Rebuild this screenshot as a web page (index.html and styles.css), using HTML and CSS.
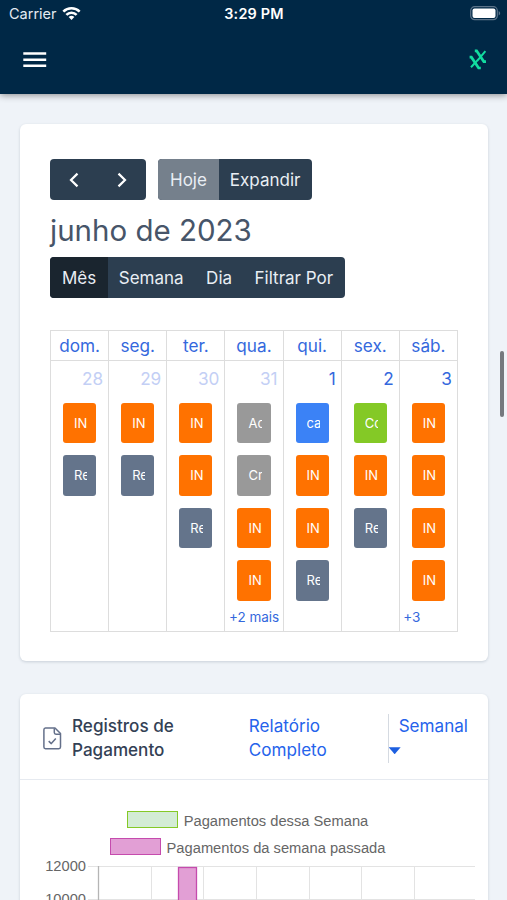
FILE: index.html
```
<!DOCTYPE html>
<html lang="pt-BR">

<head>
  <meta charset="utf-8">
  <meta name="viewport" content="width=device-width, initial-scale=1.0">
  <title>Painel</title>
  <link rel="stylesheet" href="styles.css">
</head>

<body>
  <header class="topbar">
    <div class="status">
      <div class="carrier">
        <span>Carrier</span>
        <svg width="19" height="15" viewBox="0 0 20 15">
          <g fill="none" stroke="#fff" stroke-width="2.7">
            <path d="M1.4 5.6a12.2 12.2 0 0 1 17.2 0" />
            <path d="M4.6 8.9a7.6 7.6 0 0 1 10.8 0" />
          </g>
          <path fill="#fff" d="M10 14.4l-3-3.1a4.3 4.3 0 0 1 6 0z" />
        </svg>
      </div>
      <div class="clock">3:29 PM</div>
      <svg class="battery" width="31" height="15" viewBox="0 0 31 15">
        <rect x=".7" y=".7" width="26.6" height="13" rx="4" fill="none" stroke="#5b7389" stroke-width="1.2" />
        <rect x="2.5" y="2.5" width="23" height="9.4" rx="2" fill="#fff" />
        <path d="M28.7 5v4.4c2-.8 2-3.6 0-4.4z" fill="#5b7389" />
      </svg>
    </div>
    <nav class="nav">
      <svg width="24" height="16" viewBox="0 0 24 16">
        <path d="M.3 1.5h22.9M.3 7.7h22.9M.3 13.8h22.9" stroke="#fff" stroke-width="2.5" />
      </svg>
      <svg class="brand" width="18" height="21" viewBox="0 0 18 21" fill="none" stroke="#12dca0">
        <path stroke-width="2.7" d="M5.800 1.800h1.800l7.200 10.800h2.200M.600 8.200h1.800l7.200 10.800h2.200" />
        <path stroke-width="2" d="M16.400 2.200L8.400 11.600M11 8.600L2 18.200" />
      </svg>
    </nav>
  </header>

  <main class="content">
    <section class="card calendar-card">
      <div class="toolbar">
        <div class="btn-group arrows">
          <button class="btn"><svg width="10" height="16" viewBox="0 0 10 16"><path d="M8.5 1.6L2 8l6.500 6.400" /></svg></button>
          <button class="btn"><svg width="10" height="16" viewBox="0 0 10 16"><path d="M1.500 1.600L8 8l-6.500 6.400" /></svg></button>
        </div>
        <div class="btn-group">
          <button class="btn disabled">Hoje</button>
          <button class="btn">Expandir</button>
        </div>
      </div>
      <h2 class="month">junho de 2023</h2>
      <div class="btn-group views">
        <button class="btn active">Mês</button>
        <button class="btn">Semana</button>
        <button class="btn">Dia</button>
        <button class="btn">Filtrar Por</button>
      </div>

      <div class="calendar">
        <div class="weekday">dom.</div>
        <div class="weekday">seg.</div>
        <div class="weekday">ter.</div>
        <div class="weekday">qua.</div>
        <div class="weekday">qui.</div>
        <div class="weekday">sex.</div>
        <div class="weekday">sáb.</div>

        <div class="day other">
          <span class="num">28</span>
          <a class="event orange"><span>IN</span></a>
          <a class="event slate"><span>Re</span></a>
        </div>
        <div class="day other">
          <span class="num">29</span>
          <a class="event orange"><span>IN</span></a>
          <a class="event slate"><span>Re</span></a>
        </div>
        <div class="day other">
          <span class="num">30</span>
          <a class="event orange"><span>IN</span></a>
          <a class="event orange"><span>IN</span></a>
          <a class="event slate"><span>Re</span></a>
        </div>
        <div class="day other">
          <span class="num">31</span>
          <a class="event gray"><span>Ac</span></a>
          <a class="event gray"><span>Cr</span></a>
          <a class="event orange"><span>IN</span></a>
          <a class="event orange"><span>IN</span></a>
          <a class="more">+2 mais</a>
        </div>
        <div class="day">
          <span class="num">1</span>
          <a class="event blue"><span>ca</span></a>
          <a class="event orange"><span>IN</span></a>
          <a class="event orange"><span>IN</span></a>
          <a class="event slate"><span>Re</span></a>
        </div>
        <div class="day">
          <span class="num">2</span>
          <a class="event green"><span>Co</span></a>
          <a class="event orange"><span>IN</span></a>
          <a class="event slate"><span>Re</span></a>
        </div>
        <div class="day">
          <span class="num">3</span>
          <a class="event orange"><span>IN</span></a>
          <a class="event orange"><span>IN</span></a>
          <a class="event orange"><span>IN</span></a>
          <a class="event orange"><span>IN</span></a>
          <a class="more">+3</a>
        </div>
      </div>
    </section>

    <section class="card">
      <div class="card-header">
        <svg class="file-icon" width="19" height="23" viewBox="0 0 19 23" fill="none" stroke="#64708a" stroke-width="1.5" stroke-linejoin="round">
          <path d="M2.500 1h9.500l5.500 5.500v13.500a1.700 1.700 0 0 1-1.700 1.700H2.500A1.700 1.700 0 0 1 .9 20V2.700A1.700 1.700 0 0 1 2.500 1z" />
          <path d="M11.300 1.200v4.300a1.700 1.700 0 0 0 1.700 1.700h4.300M5.700 14.100l2.600 2.500 4.500-5" />
        </svg>
        <h3 class="card-title">Registros de Pagamento</h3>
        <a class="report">Relatório Completo</a>
        <a class="period">Semanal <i class="caret"></i></a>
      </div>
      <div class="legend">
        <div class="legend-item"><i class="swatch current"></i>Pagamentos dessa Semana</div>
        <div class="legend-item"><i class="swatch previous"></i>Pagamentos da semana passada</div>
      </div>
      <svg class="chart" width="468" height="60" viewBox="0 0 468 60">
        <g stroke="#e3e3e3">
          <path d="M68 6.500h387M68 39.500h387" />
          <path d="M131.500 6v54M183.500 6v54M236.500 6v54M289.500 6v54M341.500 6v54M394.500 6v54" />
        </g>
        <path d="M78.500 6v54" stroke="#b5b5b5" stroke-width="1.300" />
        <rect x="158.500" y="7.500" width="18" height="60" fill="#e29fd5" stroke="#c54bad" stroke-width="1.300" />
        <g class="ticks">
          <text x="66" y="11">12000</text>
          <text x="66" y="44">10000</text>
        </g>
      </svg>
    </section>
  </main>

  <div class="scroll-thumb"></div>
</body>

</html>
```
FILE: styles.css
```
* {
  box-sizing: border-box;
}

body {
  margin: 0;
  height: 900px;
  overflow: hidden;
  background: #eff3f8;
  color: #334155;
  font-family: Inter, "Liberation Sans", sans-serif;
}

svg {
  display: block;
  flex: none;
}

.topbar {
  position: relative;
  height: 94px;
  background: #002846;
  color: #fff;
  box-shadow: 0 1px 7px rgba(0, 0, 0, .45);
}

.status {
  display: grid;
  grid-template-columns: 1fr auto 1fr;
  align-items: center;
  height: 27px;
  padding: 0 6px 0 9px;
  font-size: 14.500px;
}

.carrier {
  display: flex;
  align-items: center;
  gap: 5px;
  color: #e4ebf2;
}

.clock {
  margin-right: 2px;
  font-weight: 600;
  font-size: 14.400px;
  letter-spacing: .2px;
}

.battery {
  justify-self: end;
}

.nav {
  display: flex;
  justify-content: space-between;
  align-items: center;
  height: 65px;
  padding: 0 20px 0 23px;
}

.content {
  padding: 30px 19px 0 20px;
}

.card {
  background: #fff;
  border-radius: 6px;
  box-shadow: 0 1px 3px rgba(30, 50, 80, .18);
}

.calendar-card {
  height: 537px;
  margin-bottom: 33px;
  padding: 35px 30px 0;
}

.toolbar {
  display: flex;
  gap: 12px;
}

.btn-group {
  display: inline-flex;
  height: 41px;
  border-radius: 4px;
  overflow: hidden;
  background: #2c3e50;
}

.btn {
  display: flex;
  align-items: center;
  justify-content: center;
  padding: 0 12px;
  border: 0;
  background: none;
  color: #e9eef4;
  font: 17px Inter, sans-serif;
  white-space: nowrap;
}

.btn + .btn {
  padding-left: 11px;
}

.views .btn + .btn {
  padding-left: 10.500px;
}

.btn path {
  fill: none;
  stroke: #fff;
  stroke-width: 2.200;
}

.arrows .btn {
  width: 48px;
}

.btn.disabled {
  background: #75808c;
}

.btn.active {
  background: #1a252f;
}

.month {
  margin: 12px 0 9px;
  color: #475569;
  font-size: 29.500px;
  font-weight: 400;
  line-height: 36px;
}

.views {
  display: flex;
  width: max-content;
}

.calendar {
  display: grid;
  grid-template-columns: repeat(7, 1fr);
  grid-template-rows: 30px 270px;
  margin-top: 32px;
  border: 1px solid #ddd;
  border-right-width: 0;
}

.weekday,
.day {
  border-right: 1px solid #ddd;
  min-width: 0;
}

.weekday {
  border-bottom: 1px solid #ddd;
  color: #3468dd;
  font-size: 17.200px;
  line-height: 29px;
  text-align: center;
}

.day {
  display: flex;
  flex-direction: column;
  padding: 5.500px 12px 0;
}

.num {
  margin: 0 -7px 12.400px;
  color: #3468dd;
  font-size: 17.200px;
  line-height: 24px;
  text-align: right;
}

.other .num {
  color: #c3cff5;
}

.event {
  height: 40.500px;
  margin-bottom: 12px;
  padding: 0 9px 0 11px;
  border-radius: 3px;
  color: #fff;
  font-size: 13px;
  line-height: 40px;
}

.event span {
  display: block;
  overflow: hidden;
  white-space: nowrap;
}

.orange { background: #ff7200; }
.slate { background: #64748b; }
.gray { background: #999; }
.blue { background: #3b82f6; }
.green { background: #84c926; }

.more {
  margin: -5.500px -10px 0 -8.500px;
  color: #3468dd;
  font-size: 13.500px;
  line-height: 20px;
  white-space: nowrap;
}

.card-header {
  display: flex;
  height: 86px;
  padding: 20px 20px 0 23px;
  border-bottom: 1px solid #e6eaf0;
  font-size: 17.100px;
  line-height: 24.300px;
}

.file-icon {
  margin: 13px 10px 0 0;
}

.card-title {
  width: 177px;
  margin: 0;
  padding-right: 50px;
  font-size: 17.100px;
  font-weight: 500;
}

.report,
.period {
  color: #2563eb;
}

.report {
  width: 139px;
  padding-right: 40px;
}

.period {
  height: 49px;
  border-left: 1px solid #d5dae1;
  text-indent: 10px;
}

.caret {
  display: block;
  width: 12px;
  height: 7px;
  margin-top: 9px;
  background: #1d5fe0;
  clip-path: polygon(0 0, 100% 0, 50% 100%);
}

.legend {
  display: flex;
  flex-direction: column;
  align-items: center;
  padding: 28px 13px 0 0;
  color: #666;
  font: 14.700px/27px "Liberation Sans", sans-serif;
}

.legend-item {
  display: flex;
  align-items: center;
  gap: 6px;
  height: 27px;
}

.swatch {
  width: 51px;
  height: 17px;
  margin-top: -4px;
  border: 1px solid;
}

.current {
  border-color: #84c926;
  background: #d3ecd5;
}

.previous {
  border-color: #c54bad;
  background: #e29fd5;
}

.chart {
  margin-top: -2px;
}

.ticks {
  fill: #666;
  font: 14.700px "Liberation Sans", sans-serif;
  text-anchor: end;
}

.scroll-thumb {
  position: absolute;
  top: 351px;
  right: 3px;
  width: 4px;
  height: 66px;
  border-radius: 2px;
  background: #75797e;
}
```
